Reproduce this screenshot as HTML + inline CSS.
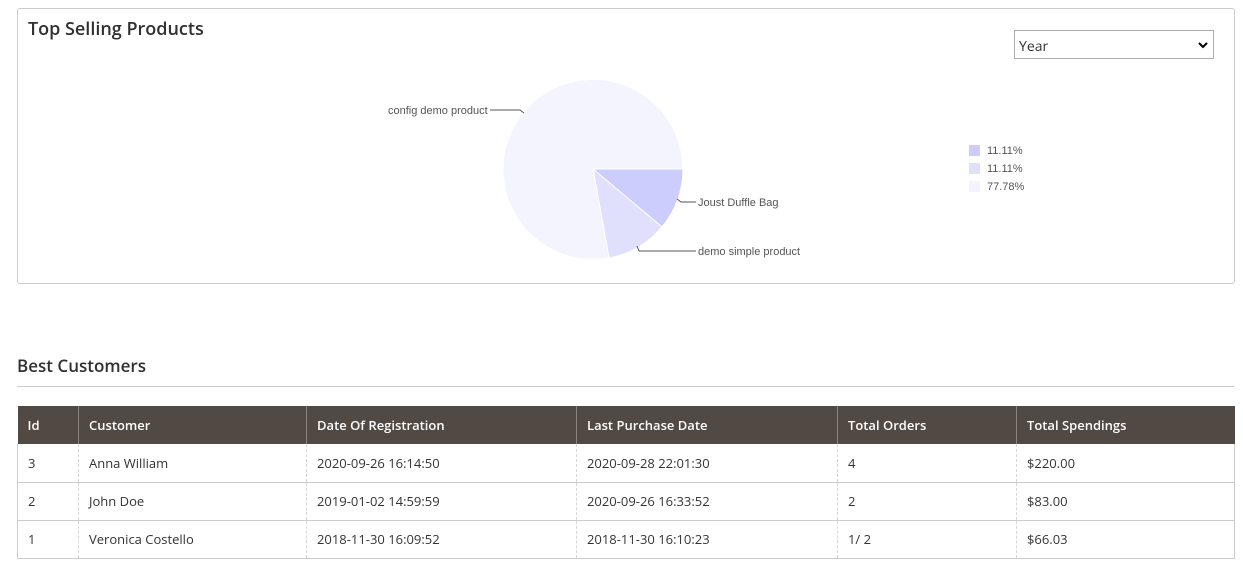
<!DOCTYPE html>
<html><head><style>
body{margin:0;background:#fff;font-family:"Open Sans","Liberation Sans",sans-serif;color:#333;}
.box{position:absolute;left:17px;top:8px;width:1216px;height:274px;border:1px solid #ccc;border-radius:3px;}
h2{position:absolute;margin:0;font-weight:600;font-size:18px;color:#303030;}
.sel{position:absolute;left:1014px;top:30px;width:200px;height:29px;border:1px solid #adadad;font-size:14px;box-sizing:border-box;padding:6px 4px;}
.sel svg{position:absolute;right:5px;top:11px}
.hr{position:absolute;left:17px;top:386px;width:1217px;height:1px;background:#ccc}
table{position:absolute;left:17px;top:406px;width:1218px;border-collapse:collapse;font-size:13px;}
th{background:#514943;color:#fff;text-align:left;font-weight:600;height:38px;padding:0 10px;border-left:1px solid #8a837f;box-sizing:border-box}
td{height:38px;padding:0 10px;border-left:1px dashed #d6d6d6;border-bottom:1px solid #ccc;box-sizing:border-box;color:#333}
tr td:first-child{border-left:1px solid #ccc}
tr td:last-child{border-right:1px solid #ccc}
</style></head><body>
<div class="box"></div>
<h2 style="left:28px;top:17px">Top Selling Products</h2>
<div class="sel">Year<svg width="10" height="7"><path d="M1 1L5 5L9 1" stroke="#000" stroke-width="2" fill="none"/></svg></div>
<svg style="position:absolute;left:0;top:0" width="1243" height="290" font-family="Liberation Sans,Arial,sans-serif" font-size="11" fill="#555">
<path d="M593 169 L683 169 A90 90 0 0 1 662 227 Z" fill="#ccccfd" stroke="#fff"/>
<path d="M593 169 L662 227 A90 90 0 0 1 609 258 Z" fill="#e0e0fd" stroke="#fff"/>
<path d="M593 169 L609 258 A90 90 0 1 1 683 169 Z" fill="#f4f4fe" stroke="#fff"/>
<path d="M490 110 H520 L524 113" stroke="#555" fill="none"/>
<path d="M677 199 L681 202 H696" stroke="#555" fill="none"/>
<path d="M637 246 L639 251 H696" stroke="#555" fill="none"/>
<text x="388" y="114">config demo product</text>
<text x="698" y="206">Joust Duffle Bag</text>
<text x="698" y="255">demo simple product</text>
<rect x="969" y="145" width="11" height="11" fill="#ccccfd"/>
<rect x="969" y="163" width="11" height="11" fill="#e0e0fd"/>
<rect x="969" y="181" width="11" height="11" fill="#f4f4fe"/>
<text x="987" y="154">11.11%</text><text x="987" y="172">11.11%</text><text x="987" y="190">77.78%</text>
</svg>
<h2 style="left:17px;top:354px;font-size:17px">Best Customers</h2>
<div class="hr"></div>
<table>
<tr><th style="width:61px;border-left:none">Id</th><th style="width:228px">Customer</th><th style="width:270px">Date Of Registration</th><th style="width:261px">Last Purchase Date</th><th style="width:179px">Total Orders</th><th>Total Spendings</th></tr>
<tr><td>3</td><td>Anna William</td><td>2020-09-26 16:14:50</td><td>2020-09-28 22:01:30</td><td>4</td><td>$220.00</td></tr>
<tr><td>2</td><td>John Doe</td><td>2019-01-02 14:59:59</td><td>2020-09-26 16:33:52</td><td>2</td><td>$83.00</td></tr>
<tr><td>1</td><td>Veronica Costello</td><td>2018-11-30 16:09:52</td><td>2018-11-30 16:10:23</td><td>1/ 2</td><td>$66.03</td></tr>
</table>
</body></html>
